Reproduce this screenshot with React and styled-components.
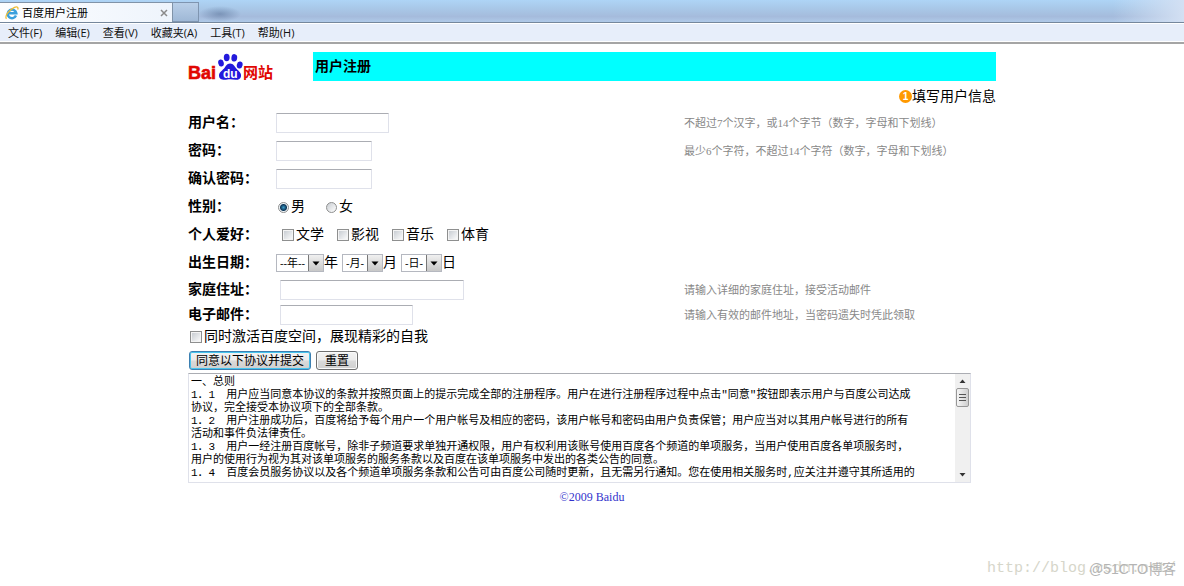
import styled, { createGlobalStyle } from 'styled-components';

const GlobalStyle = createGlobalStyle`
  * {
    box-sizing: border-box;
  }
  body {
    margin: 0;
    background: #fff;
    color: #000;
    font-family: "Liberation Serif", "Noto Sans CJK SC", sans-serif;
    font-size: 14px;
    line-height: 20px;
  }
  svg {
    display: block;
  }
`;

const Window = styled.div`
  position: relative;
  min-height: 100vh;
`;

const TitleBar = styled.div`
  display: flex;
  align-items: flex-end;
  height: 22px;
  background:
    linear-gradient(to right, transparent 94%, #d3e0f3 100%),
    linear-gradient(#aed4f6, #a9c9e9 35%, #a5bbdc 75%, #afc9e8);
`;

const Tab = styled.div`
  display: flex;
  align-items: center;
  gap: 3px;
  width: 173px;
  height: 20px;
  padding: 0 4px 0 5px;
  border: 1px solid #8093a8;
  border-width: 1px 1px 0 0;
  background: linear-gradient(to right, #fdfeff, #eef4fc);
  font-family: "Open Sans", "Noto Sans CJK SC", sans-serif;
  font-size: 11px;
`;

const TabTitle = styled.span`
  flex: 1;
`;

const CloseTab = styled.button`
  display: flex;
  padding: 0;
  border: 0;
  background: none;
`;

const NewTab = styled.button`
  width: 26px;
  height: 20px;
  padding: 0;
  border: 1px solid #7f95b0;
  border-left: 0;
  background: linear-gradient(#b9cfe8, #9fb8d6);
`;

const Reflection = styled.span`
  width: 42px;
  height: 16px;
  background: radial-gradient(closest-side, rgba(60, 85, 125, 0.4), transparent);
`;

const MenuBar = styled.nav`
  display: flex;
  align-items: center;
  gap: 13px;
  height: 22px;
  padding: 0 8px;
  border-top: 1px solid #75879c;
  border-bottom: 2px solid #a5a5a5;
  background: #e7eefa;
  box-shadow: inset 0 1px #fff, inset 0 -1px #fff;
`;

const MenuItem = styled.button`
  padding: 0;
  border: 0;
  background: none;
  color: #111;
  font-family: "Open Sans", "Noto Sans CJK SC", sans-serif;
  font-size: 11px;
  line-height: 16px;
`;

const Page = styled.main`
  max-width: 808px;
  margin: 0 auto;
  padding-top: 8px;
`;

const Header = styled.header`
  display: flex;
`;

const LogoBox = styled.div`
  flex: 0 0 125px;
`;

const Banner = styled.h1`
  flex: 1;
  margin: 0;
  padding: 0 2px;
  background: #0ff;
  font-size: 14px;
  line-height: 29px;
`;

const Step = styled.div`
  display: flex;
  justify-content: flex-end;
  align-items: center;
  height: 28px;
  padding-top: 3px;
`;

const StepNumber = styled.span`
  width: 13px;
  height: 13px;
  border-radius: 50%;
  background: #f90;
  color: #fff;
  font: bold 10px/13px "Liberation Sans", sans-serif;
  text-align: center;
`;

const Row = styled.div`
  display: grid;
  grid-template-columns: 88px 408px 1fr;
  align-items: center;
  height: ${props => props.$height || 28}px;
`;

const Label = styled.label`
  font-weight: bold;
`;

const Field = styled.div`
  display: flex;
  align-items: center;
  gap: ${props => props.$gap || 0}px;
  padding-left: ${props => props.$indent || 0}px;
`;

const Hint = styled.span`
  color: #888;
  font-size: 11px;
`;

const TextInput = styled.input`
  width: ${props => props.$width}px;
  height: 20px;
  padding: 1px 3px;
  border: 1px solid #dfe1ea;
  border-top-color: #abadb3;
  border-radius: 1px;
  font-size: 12px;
`;

const Choice = styled.label`
  display: flex;
  align-items: center;
  gap: 2px;
`;

const Radio = styled.input`
  appearance: none;
  width: 11px;
  height: 11px;
  margin: 0;
  border: 1px solid #8e8f8f;
  border-radius: 50%;
  background: linear-gradient(135deg, #c9cdd2, #fff);
  &:checked {
    background: radial-gradient(circle, #3a9cc8 0, #0b3558 3px, #eef3f6 4px);
  }
`;

const Checkbox = styled.input`
  appearance: none;
  width: 12px;
  height: 12px;
  margin: 0;
  border: 1px solid #8e8f8f;
  background: linear-gradient(135deg, #c3c8ce, #fff);
  box-shadow: inset 0 0 0 1px #f4f4f4;
`;

const arrowButton = `
  <svg xmlns='http://www.w3.org/2000/svg' width='16' height='18'>
    <linearGradient id='g' x2='0' y2='1'>
      <stop offset='0' stop-color='#f2f2f2'/>
      <stop offset='.5' stop-color='#dcdcdc'/>
      <stop offset='1' stop-color='#c6c6c6'/>
    </linearGradient>
    <rect x='.5' y='.5' width='15' height='17' fill='url(#g)' stroke='#777'/>
    <path d='M4.500 7.500h7l-3.500 4z' fill='#000'/>
  </svg>
`;

const Select = styled.select`
  appearance: none;
  width: ${props => props.$width}px;
  height: 18px;
  padding: 0 0 0 3px;
  border: 1px solid #b5b8c0;
  border-radius: 0;
  background: #fff url("data:image/svg+xml,${encodeURIComponent(arrowButton).replace(/'/g, '%27')}") right -1px top -1px no-repeat;
  background-origin: padding-box;
  background-clip: border-box;
  color: #000;
  font-family: "Open Sans", "Noto Sans CJK SC", sans-serif;
  font-size: 11px;
  line-height: 16px;
`;

const DatePart = styled.label`
  display: flex;
  align-items: center;
`;

const Activate = styled.div`
  display: flex;
  align-items: center;
  height: 20px;
  padding-left: 2px;
`;

const Buttons = styled.div`
  display: flex;
  align-items: center;
  gap: 5px;
  height: 26px;
  padding-left: 1px;
`;

const Button = styled.button`
  height: 19px;
  padding: 0 ${props => (props.$primary ? 6 : 8)}px;
  border: 1px solid ${props => (props.$primary ? '#3c7fb1' : '#707070')};
  border-radius: 3px;
  background: linear-gradient(#f3f3f3, #ebebeb 48%, #dadada 52%, #cfcfcf);
  box-shadow: inset 0 0 0 1px ${props => (props.$primary ? '#48c5ee' : '#fafafa')};
  color: #000;
  font-family: "Noto Sans CJK SC", sans-serif;
  font-size: 12px;
  line-height: 16px;
`;

const TermsBox = styled.div`
  display: flex;
  max-width: 783px;
  height: 110px;
  border: 1px solid #dfe1ea;
  border-top-color: #abadb3;
`;

const Terms = styled.textarea`
  flex: 1;
  padding: 2px 39px 0 2px;
  border: 0;
  outline: 0;
  resize: none;
  overflow: hidden;
  color: #000;
  font-family: "Liberation Mono", "Noto Sans CJK SC", monospace;
  font-size: 11px;
  line-height: 13px;
`;

const ScrollBar = styled.div`
  display: flex;
  flex-direction: column;
  width: 15px;
  padding: 1px;
  background: #f0f0f0;
`;

const ScrollThumb = styled.div`
  display: flex;
  align-items: center;
  justify-content: center;
  height: 19px;
  margin-bottom: auto;
  border: 1px solid #979797;
  border-radius: 2px;
  background: linear-gradient(to right, #f5f5f5, #cfcfcf);
`;

const Footer = styled.footer`
  padding-top: 4px;
  color: #33c;
  font-size: 12px;
  text-align: center;
`;

const Watermark = styled.div`
  position: absolute;
  right: 8px;
  bottom: 7px;
  display: grid;
  justify-items: end;
  align-items: center;
  pointer-events: none;
  & > * {
    grid-area: 1 / 1;
  }
`;

const BlogUrl = styled.span`
  color: #d6d6ca;
  font-family: "Liberation Mono", monospace;
  font-size: 15px;
`;

const BlogName = styled.span`
  color: #b4b4b4;
  font-family: "Liberation Sans", "Noto Sans CJK SC", sans-serif;
  font-size: 14px;
`;

const BrowserIcon = () => (
  <svg width="14" height="14" viewBox="0 0 14 14" fill="none" aria-hidden="true">
    <path d="M11 9.600A4.300 4.300 0 1 1 11.300 7.300H4" stroke="#3aa0dd" strokeWidth="2.500" />
    <path d="M1.500 12.800C-.5 10.500 3.500 4 9.500 1.300c3-1.200 4 .2 3.200 2.200" stroke="#eebc33" strokeWidth="1.300" />
  </svg>
);

const CloseIcon = () => (
  <svg width="8" height="8" viewBox="0 0 8 8" aria-hidden="true">
    <path d="M1 1l6 6M7 1L1 7" stroke="#8a8a8a" strokeWidth="1.500" />
  </svg>
);

const ScrollIcon = ({ d }) => (
  <svg width="13" height="13" viewBox="0 0 13 13" aria-hidden="true">
    <path d={d} fill="#333" />
  </svg>
);

const Logo = () => (
  <svg width="92" height="29" viewBox="0 0 92 29" overflow="visible" role="img" aria-label="Baidu">
    <g fontFamily='"Liberation Sans", "Noto Sans CJK SC", sans-serif' fontWeight="bold">
      <text x="0" y="27" fontSize="18" fill="#e10602" stroke="#e10602" strokeWidth=".6">Bai</text>
      <g fill="#2319dc">
        <ellipse cx="33" cy="11" rx="2.800" ry="3.500" transform="rotate(-12 33 11)" />
        <ellipse cx="38.700" cy="5.500" rx="2.900" ry="3.700" />
        <ellipse cx="46.300" cy="5.800" rx="2.900" ry="3.700" transform="rotate(8 46.300 5.800)" />
        <ellipse cx="51.700" cy="13" rx="2.900" ry="3.500" transform="rotate(12 51.700 13)" />
        <path d="M42 11.500c3.500 0 4.500 3 6.500 5.200 2.500 2.500 5 4.300 4.500 7.500-.4 3-3 3.800-5.500 3.600-2-.2-3.500-.5-5.500-.5s-3.500.5-5.500.5c-3 0-5.300-1-5.500-4-.2-3 2.500-4.600 4.800-7 2-2.300 3-5.300 6.200-5.300z" />
      </g>
      <text x="35" y="26" fontSize="12" fill="#fff">du</text>
      <text x="55" y="26" fontSize="15" fill="#e10602">网站</text>
    </g>
  </svg>
);

const menuItems = ['文件(F)', '编辑(E)', '查看(V)', '收藏夹(A)', '工具(T)', '帮助(H)'];

const hobbies = ['文学', '影视', '音乐', '体育'];

const dateParts = [
  { unit: '年', placeholder: '--年--', width: 48 },
  { unit: '月', placeholder: '-月-', width: 41 },
  { unit: '日', placeholder: '-日-', width: 41 },
];

const terms = `一、总则
1．1　用户应当同意本协议的条款并按照页面上的提示完成全部的注册程序。用户在进行注册程序过程中点击"同意"按钮即表示用户与百度公司达成协议，完全接受本协议项下的全部条款。
1．2　用户注册成功后，百度将给予每个用户一个用户帐号及相应的密码，该用户帐号和密码由用户负责保管；用户应当对以其用户帐号进行的所有活动和事件负法律责任。
1．3　用户一经注册百度帐号，除非子频道要求单独开通权限，用户有权利用该账号使用百度各个频道的单项服务，当用户使用百度各单项服务时，用户的使用行为视为其对该单项服务的服务条款以及百度在该单项服务中发出的各类公告的同意。
1．4　百度会员服务协议以及各个频道单项服务条款和公告可由百度公司随时更新，且无需另行通知。您在使用相关服务时,应关注并遵守其所适用的`;

const App = () => (
  <Window>
    <GlobalStyle />
    <TitleBar>
      <Tab>
        <BrowserIcon />
        <TabTitle>百度用户注册</TabTitle>
        <CloseTab aria-label="关闭"><CloseIcon /></CloseTab>
      </Tab>
      <NewTab aria-label="新建" />
      <Reflection />
    </TitleBar>
    <MenuBar>
      {menuItems.map(item => <MenuItem key={item}>{item}</MenuItem>)}
    </MenuBar>

    <Page>
      <Header>
        <LogoBox><Logo /></LogoBox>
        <Banner>用户注册</Banner>
      </Header>
      <Step>
        <StepNumber>1</StepNumber>
        填写用户信息
      </Step>

      <form onSubmit={event => event.preventDefault()}>
        <Row>
          <Label htmlFor="username">用户名：</Label>
          <Field><TextInput id="username" $width={113} /></Field>
          <Hint>不超过7个汉字，或14个字节（数字，字母和下划线）</Hint>
        </Row>
        <Row>
          <Label htmlFor="password">密码：</Label>
          <Field><TextInput id="password" type="password" $width={96} /></Field>
          <Hint>最少6个字符，不超过14个字符（数字，字母和下划线）</Hint>
        </Row>
        <Row>
          <Label htmlFor="confirm">确认密码：</Label>
          <Field><TextInput id="confirm" type="password" $width={96} /></Field>
        </Row>
        <Row>
          <Label as="span" id="gender">性别：</Label>
          <Field role="radiogroup" aria-labelledby="gender" $indent={2} $gap={21}>
            <Choice><Radio type="radio" name="gender" defaultChecked />男</Choice>
            <Choice><Radio type="radio" name="gender" />女</Choice>
          </Field>
        </Row>
        <Row>
          <Label as="span" id="hobby">个人爱好：</Label>
          <Field role="group" aria-labelledby="hobby" $indent={6} $gap={13}>
            {hobbies.map(hobby => (
              <Choice key={hobby}><Checkbox type="checkbox" name="hobby" />{hobby}</Choice>
            ))}
          </Field>
        </Row>
        <Row $height={27}>
          <Label as="span" id="birthday">出生日期：</Label>
          <Field role="group" aria-labelledby="birthday" $gap={4}>
            {dateParts.map(({ unit, placeholder, width }) => (
              <DatePart key={unit}>
                <Select $width={width}>
                  <option>{placeholder}</option>
                </Select>
                {unit}
              </DatePart>
            ))}
          </Field>
        </Row>
        <Row $height={27}>
          <Label htmlFor="address">家庭住址：</Label>
          <Field $indent={4}><TextInput id="address" $width={184} /></Field>
          <Hint>请输入详细的家庭住址，接受活动邮件</Hint>
        </Row>
        <Row $height={24}>
          <Label htmlFor="email">电子邮件：</Label>
          <Field $indent={4}><TextInput id="email" $width={133} /></Field>
          <Hint>请输入有效的邮件地址，当密码遗失时凭此领取</Hint>
        </Row>
        <Activate>
          <Choice><Checkbox type="checkbox" name="space" />同时激活百度空间，展现精彩的自我</Choice>
        </Activate>
        <Buttons>
          <Button type="submit" $primary>同意以下协议并提交</Button>
          <Button type="reset">重置</Button>
        </Buttons>
        <TermsBox>
          <Terms aria-label="协议" readOnly value={terms} />
          <ScrollBar aria-hidden="true">
            <ScrollIcon d="M3.500 8h6l-3-3.500z" />
            <ScrollThumb>
              <svg width="7" height="9" viewBox="0 0 7 9">
                <path d="M0 1.500h7M0 4.500h7M0 7.500h7" stroke="#555" />
              </svg>
            </ScrollThumb>
            <ScrollIcon d="M3.500 5h6l-3 3.500z" />
          </ScrollBar>
        </TermsBox>
      </form>
      <Footer>©2009 Baidu</Footer>
    </Page>

    <Watermark>
      <BlogUrl>http://blog.csdn.net/</BlogUrl>
      <BlogName>@51CTO博客</BlogName>
    </Watermark>
  </Window>
);

export default App;
